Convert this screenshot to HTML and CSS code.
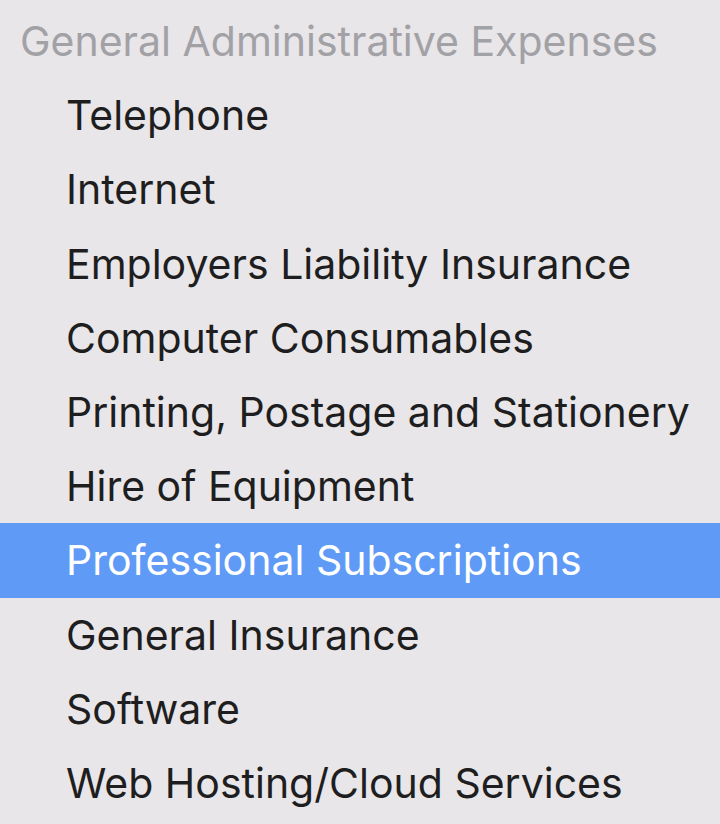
FILE: index.html
```html
<!DOCTYPE html>
<html lang="en">
<head>
  <meta charset="UTF-8" />
  <title>Account picker</title>
  <link rel="stylesheet" href="styles.css">
</head>
<body>
  <ul class="menu">
    <li class="group-title">General Administrative Expenses</li>
    <li class="item">Telephone</li>
    <li class="item">Internet</li>
    <li class="item">Employers Liability Insurance</li>
    <li class="item">Computer Consumables</li>
    <li class="item">Printing, Postage and Stationery</li>
    <li class="item">Hire of Equipment</li>
    <li class="item selected">Professional Subscriptions</li>
    <li class="item">General Insurance</li>
    <li class="item">Software</li>
    <li class="item">Web Hosting/Cloud Services</li>
  </ul>
</body>
</html>
```

FILE: styles.css
```css
body {
  margin: 0;
  background: #e8e6e9;
  font-family: Inter, "Noto Sans", sans-serif;
  height: 824px;
  overflow: hidden;
}
.menu {
  list-style: none;
  margin: 0;
  padding: 4px 0 0;
}
.menu li {
  height: 74.2px;
  display: flex;
  align-items: center;
  font-size: 41px;
  white-space: nowrap;
}
.group-title {
  padding-left: 20px;
  color: #a2a1a5;
}
.item {
  padding-left: 66px;
  color: #1e1e20;
}
.item.selected {
  background: #5f9bf6;
  color: #fff;
}
```
